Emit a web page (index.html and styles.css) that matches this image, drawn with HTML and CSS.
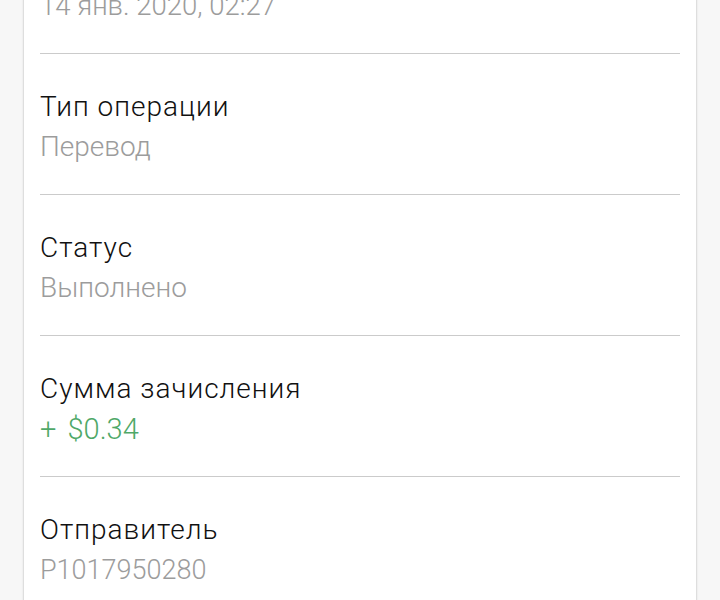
FILE: index.html
```html
<!DOCTYPE html>
<html lang="ru">
<head>
<meta charset="utf-8">
<link rel="stylesheet" href="styles.css">
</head>
<body>
<div class="card">
  <div class="row">
    <div class="label">Дата</div>
    <div class="value date">14 янв. 2020, 02:27</div>
  </div>
  <div class="row">
    <div class="label">Тип операции</div>
    <div class="value">Перевод</div>
  </div>
  <div class="row">
    <div class="label">Статус</div>
    <div class="value">Выполнено</div>
  </div>
  <div class="row">
    <div class="label">Сумма зачисления</div>
    <div class="value positive"><span class="sign">+</span> $0.34</div>
  </div>
  <div class="row">
    <div class="label">Отправитель</div>
    <div class="value code">P1017950280</div>
  </div>
</div>
</body>
</html>
```

FILE: styles.css
```css
html, body {
  margin: 0;
  padding: 0;
  background: #f7f7f7;
  overflow: hidden;
}
body {
  font-family: Roboto, "Noto Sans", sans-serif;
  height: 600px;
}
.card {
  margin: -87px 0 0 24px;
  width: 672px;
  background: #ffffff;
  box-shadow: 0 0 2px rgba(0, 0, 0, 0.25), 0 0 4px rgba(0, 0, 0, 0.06);
}
.row {
  margin: 0 16px;
  padding: 33px 0 27px;
  border-bottom: 1px solid #cbcbcb;
}
.label {
  font-size: 28px;
  font-weight: 300;
  letter-spacing: 1px;
  line-height: 40px;
  color: #111111;
}
.value {
  font-size: 28px;
  font-weight: 300;
  line-height: 40px;
  color: #9c9c9c;
}
.value.date {
  font-size: 27.5px;
}
.value.positive {
  font-size: 29px;
  color: #4fa868;
}
.sign {
  margin-right: 4px;
}
.value.code {
  font-size: 27px;
}
```
